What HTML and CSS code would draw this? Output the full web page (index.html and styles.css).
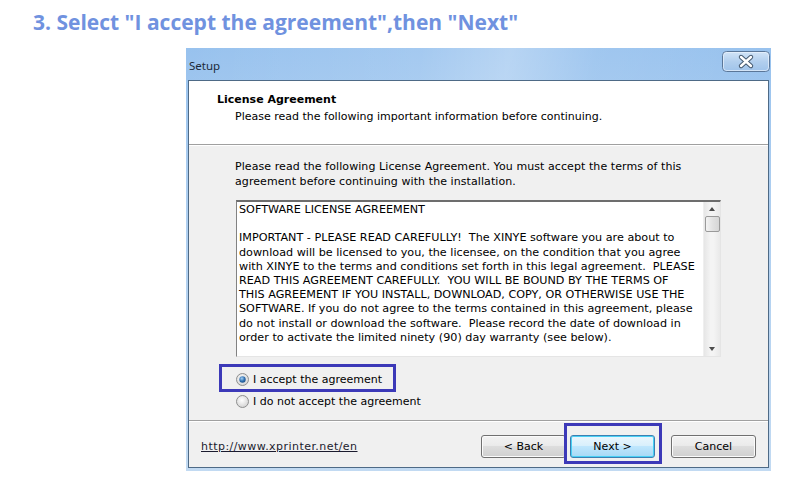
FILE: index.html
```html
<!DOCTYPE html>
<html>
<head>
<meta charset="utf-8">
<link rel="stylesheet" href="styles.css">
</head>
<body>
<h1 class="heading">3. Select "I accept the agreement",then "Next"</h1>
<div class="window">
  <div class="titlebar">
    <span class="title">Setup</span>
    <span class="close">
      <svg width="48" height="21" viewBox="0 0 48 21">
        <defs>
          <linearGradient id="cg" x1="0" y1="0" x2="0" y2="1">
            <stop offset="0" stop-color="#d3e5f8"/>
            <stop offset="0.5" stop-color="#b2cfee"/>
            <stop offset="1" stop-color="#9fc3ea"/>
          </linearGradient>
        </defs>
        <rect x="0.5" y="0.5" width="47" height="20" rx="4" fill="url(#cg)" stroke="#5a7698"/>
        <rect x="1.5" y="1.5" width="45" height="18" rx="3" fill="none" stroke="#e9f2fc" stroke-opacity="0.7"/>
        <path d="M19 6 L29 15 M29 6 L19 15" stroke="#45596f" stroke-width="4.4" stroke-linecap="round"/>
        <path d="M19 6 L29 15 M29 6 L19 15" stroke="#ffffff" stroke-width="2.4" stroke-linecap="round"/>
      </svg>
    </span>
  </div>
  <div class="client">
    <div class="header">
      <div class="h-title">License Agreement</div>
      <div class="h-sub">Please read the following important information before continuing.</div>
    </div>
    <div class="body">
      <p class="intro">Please read the following License Agreement. You must accept the terms of this<br>agreement before continuing with the installation.</p>
      <div class="memo">
        <div class="memo-text">SOFTWARE LICENSE AGREEMENT

IMPORTANT - PLEASE READ CAREFULLY!  The XINYE software you are about to
download will be licensed to you, the licensee, on the condition that you agree
with XINYE to the terms and conditions set forth in this legal agreement.  PLEASE
READ THIS AGREEMENT CAREFULLY.  YOU WILL BE BOUND BY THE TERMS OF
THIS AGREEMENT IF YOU INSTALL, DOWNLOAD, COPY, OR OTHERWISE USE THE
SOFTWARE. If you do not agree to the terms contained in this agreement, please
do not install or download the software.  Please record the date of download in
order to activate the limited ninety (90) day warranty (see below).</div>
        <div class="scrollbar">
          <span class="arrow up"></span>
          <span class="thumb"></span>
          <span class="track"></span>
          <span class="arrow down"></span>
        </div>
      </div>
      <div class="radios">
        <label class="radio highlighted">
          <svg class="rb" width="13" height="13" viewBox="0 0 13 13">
            <defs>
              <radialGradient id="rg1" cx="0.45" cy="0.4" r="0.6">
                <stop offset="0" stop-color="#ffffff"/>
                <stop offset="1" stop-color="#d4d4d4"/>
              </radialGradient>
              <radialGradient id="dot" cx="0.4" cy="0.35" r="0.7">
                <stop offset="0" stop-color="#a5d2f5"/>
                <stop offset="0.6" stop-color="#2f6fb0"/>
                <stop offset="1" stop-color="#1d4f86"/>
              </radialGradient>
            </defs>
            <circle cx="6.5" cy="6.5" r="6" fill="url(#rg1)" stroke="#8e8f8f"/>
            <circle cx="6.5" cy="6.5" r="3.2" fill="url(#dot)"/>
          </svg>
          <span>I accept the agreement</span>
        </label>
        <label class="radio">
          <svg class="rb" width="13" height="13" viewBox="0 0 13 13">
            <defs>
              <radialGradient id="rg2" cx="0.45" cy="0.4" r="0.6">
                <stop offset="0" stop-color="#ffffff"/>
                <stop offset="1" stop-color="#d4d4d4"/>
              </radialGradient>
            </defs>
            <circle cx="6.5" cy="6.5" r="6" fill="url(#rg2)" stroke="#8e8f8f"/>
          </svg>
          <span>I do not accept the agreement</span>
        </label>
      </div>
    </div>
    <div class="footer">
      <a class="link" href="#">http://www.xprinter.net/en</a>
      <div class="buttons">
        <button class="btn">&lt; Back</button>
        <button class="btn default highlighted">Next &gt;</button>
        <button class="btn cancel">Cancel</button>
      </div>
    </div>
  </div>
</div>
</body>
</html>
```
FILE: styles.css
```css
* { box-sizing: border-box; }
html, body { margin: 0; padding: 0; background: #ffffff; }
body { width: 790px; height: 487px; overflow: hidden; }

.heading {
  margin: 0;
  padding: 9px 0 0 33px;
  height: 48px;
  font-family: "Open Sans", sans-serif;
  font-weight: 700;
  font-size: 21px;
  line-height: 26px;
  color: #7092df;
}

.window {
  margin-left: 186px;
  width: 585px;
  height: 423px;
  background: linear-gradient(180deg, #98c2ee 0%, #abcdf0 30%, #c2daf2 100%);
  padding: 0 2px 3px 2px;
  display: flex;
  flex-direction: column;
}

.titlebar {
  height: 32px;
  display: flex;
  align-items: flex-start;
  justify-content: space-between;
  background: linear-gradient(100deg, rgba(255,255,255,0.0) 0%, rgba(255,255,255,0.12) 40%, rgba(255,255,255,0.3) 55%, rgba(255,255,255,0.08) 70%, rgba(255,255,255,0) 100%);
}
.title {
  font-family: "Noto Sans", "DejaVu Sans", sans-serif;
  font-size: 11.5px;
  color: #1c2a3a;
  padding: 10px 0 0 1px;
  line-height: 16px;
}
.close { margin: 3px -1px 0 0; height: 21px; display: block; }
.close svg { display: block; }

.client {
  flex: 1;
  border: 1px solid #4e6a86;
  background: #f0f0f0;
  display: flex;
  flex-direction: column;
  font-family: "DejaVu Sans", sans-serif;
  font-size: 11px;
  color: #000;
}

.header {
  height: 64px;
  background: #ffffff;
  border-bottom: 1px solid #a0a0a0;
  box-shadow: 0 1px 0 #ffffff;
  padding: 11px 0 0 28px;
  line-height: 16px;
}
.h-title { font-weight: bold; }
.h-sub { padding-left: 18px; margin-top: 1px; }

.body {
  height: 275px;
  border-bottom: 1px solid #a0a0a0;
  box-shadow: 0 1px 0 #ffffff;
  padding: 13px 0 0 46px;
  margin-top: 1px;
}
.intro { margin: 0; line-height: 15px; letter-spacing: 0.08px; }

.memo {
  margin-top: 11px;
  margin-left: 1px;
  width: 485px;
  height: 157px;
  background: #fff;
  border-style: solid;
  border-width: 2px 1px 1px 1px;
  border-color: #6d6d6d #e5e5e5 #e5e5e5 #828282;
  display: flex;
}
.memo-text {
  flex: 1;
  white-space: pre;
  font-size: 11.2px;
  line-height: 14.2px;
  padding: 1px 0 0 2px;
  overflow: hidden;
}
.scrollbar {
  width: 17px;
  background: linear-gradient(90deg, #e6e6e6, #f4f4f4 40%, #f4f4f4 60%, #e9e9e9);
  border-left: 1px solid #efefef;
  display: flex;
  flex-direction: column;
  align-items: center;
}
.arrow { width: 0; height: 0; border-left: 3.5px solid transparent; border-right: 3.5px solid transparent; }
.arrow.up { border-bottom: 4px solid #4d4d4d; margin-top: 5px; }
.arrow.down { border-top: 4px solid #4d4d4d; margin-bottom: 5px; }
.thumb {
  margin-top: 5px;
  width: 15px;
  height: 16px;
  border: 1px solid #9a9a9a;
  border-radius: 2px;
  background: linear-gradient(90deg, #f3f3f3, #e2e2e2 50%, #d6d6d6);
}
.track { flex: 1; }

.radios { margin-top: 15px; display: flex; flex-direction: column; gap: 8px; }
.radio {
  display: flex;
  align-items: center;
  gap: 4px;
  height: 14px;
  position: relative;
  align-self: flex-start;
}
.rb { display: block; margin-left: 1px; }
.radio.highlighted::after {
  content: "";
  position: absolute;
  left: -16px; right: -14px; top: -8px; bottom: -6px;
  border: 3.5px solid #3c39b8;
}

.footer {
  flex: 1;
  display: flex;
  align-items: flex-start;
  justify-content: space-between;
  padding: 13px 12px 0 12px;
  margin-top: 1px;
}
.link {
  color: #1b1b2e;
  text-decoration: underline;
  margin-top: 5px;
  line-height: 14px;
  letter-spacing: 0.45px;
}
.buttons { display: flex; margin-top: 0; }
.btn {
  width: 85px;
  height: 23px;
  font-family: "DejaVu Sans", sans-serif;
  font-size: 11px;
  color: #000;
  border: 1px solid #707070;
  border-radius: 3px;
  background: linear-gradient(180deg, #f2f2f2 0%, #ebebeb 45%, #dddddd 50%, #cfcfcf 100%);
  box-shadow: inset 0 0 0 1px #fbfbfb;
  padding: 0;
  margin-top: 0;
}
.btn.default {
  margin-left: 4px;
  border-color: #3c7fb1;
  background: linear-gradient(180deg, #eaf6fd 0%, #d9f0fc 45%, #bee6fd 50%, #a7d9f5 100%);
  box-shadow: inset 0 0 0 1px #48d0f5;
  position: relative;
}
.btn.cancel { margin-left: 16px; }
.btn.highlighted::after {
  content: "";
  position: absolute;
  left: -7px; right: -8px; top: -13px; bottom: -7px;
  border: 3.5px solid #3c39b8;
}
```
